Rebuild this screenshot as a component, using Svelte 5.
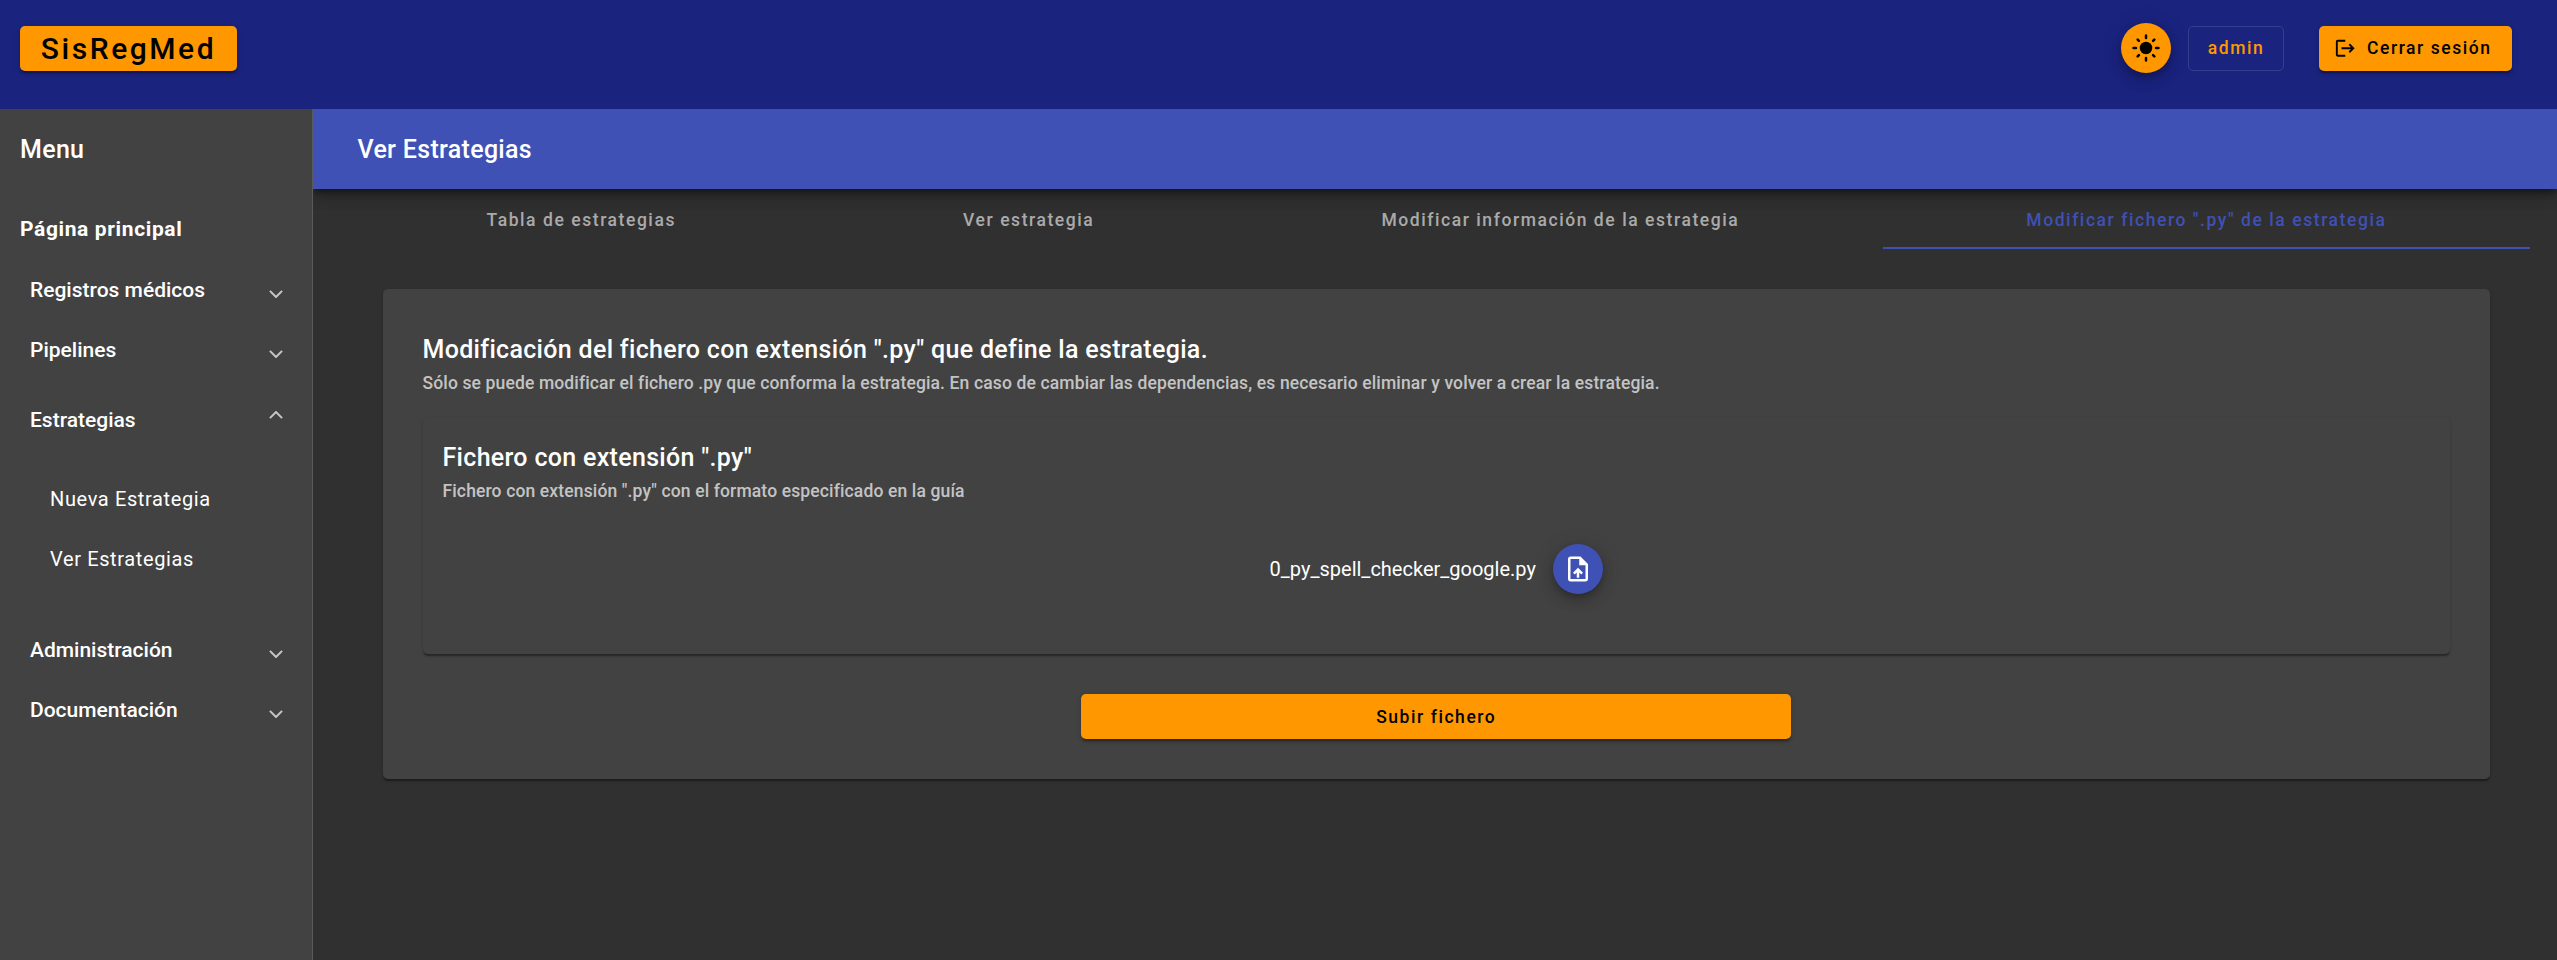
<script>
  const tabs = [
    'Tabla de estrategias',
    'Ver estrategia',
    'Modificar información de la estrategia',
    'Modificar fichero ".py" de la estrategia'
  ];
  let activeTab = $state(3);

  let groups = $state([
    { title: 'Registros médicos', open: false, items: [] },
    { title: 'Pipelines', open: false, items: [] },
    { title: 'Estrategias', open: true, items: ['Nueva Estrategia', 'Ver Estrategias'] },
    { title: 'Administración', open: false, items: [] },
    { title: 'Documentación', open: false, items: [] }
  ]);
</script>

<div class="page">
  <header class="topbar">
    <button class="btn raised brand">SisRegMed</button>
    <div class="actions">
      <button class="fab accent" aria-label="Tema">
        <svg viewBox="0 0 24 24" width="30" height="30">
          <circle cx="12" cy="12" r="5" />
          <path
            d="M2 12h2M20 12h2M12 2v2M12 20v2M5.29 5.29l1.06 1.06M17.65 17.65l1.06 1.06M18.71 5.29l-1.06 1.06M6.35 17.65l-1.06 1.06"
            stroke="currentColor" stroke-width="2" stroke-linecap="round" />
        </svg>
      </button>
      <button class="btn outlined">admin</button>
      <button class="btn raised logout">
        <svg viewBox="0 0 24 24" width="22.5" height="22.5">
          <path d="M17 7l-1.41 1.41L18.17 11H8v2h10.17l-2.58 2.58L17 17l5-5zM4 5h8V3H4c-1.1 0-2 .9-2 2v14c0 1.1.9 2 2 2h8v-2H4V5z" />
        </svg>
        <span>Cerrar sesión</span>
      </button>
    </div>
  </header>

  <div class="body">
    <nav class="sidebar">
      <div class="menu-title">Menu</div>
      <div class="home">Página principal</div>
      {#each groups as group}
        <section>
          <button class="group" class:open={group.open} onclick={() => (group.open = !group.open)}>
            <span>{group.title}</span>
            <svg class="chevron" viewBox="0 0 14 8" width="14" height="8">
              {#if group.open}
                <path d="M.9 7.1L7 1l6.100 6.100" />
              {:else}
                <path d="M.9.9L7 7l6.100-6.100" />
              {/if}
            </svg>
          </button>
          {#if group.open && group.items.length}
            <div class="items">
              {#each group.items as item}
                <div class="item">{item}</div>
              {/each}
            </div>
          {/if}
        </section>
      {/each}
    </nav>

    <main>
      <div class="toolbar">Ver Estrategias</div>
      <div class="tabs">
        {#each tabs as tab, i}
          <button class="tab" class:active={i === activeTab} onclick={() => (activeTab = i)}>{tab}</button>
        {/each}
      </div>

      <div class="card outer">
        <h2>Modificación del fichero con extensión ".py" que define la estrategia.</h2>
        <p>Sólo se puede modificar el fichero .py que conforma la estrategia. En caso de cambiar las dependencias, es necesario eliminar y volver a crear la estrategia.</p>

        <div class="card inner">
          <h2>Fichero con extensión ".py"</h2>
          <p>Fichero con extensión ".py" con el formato especificado en la guía</p>
          <div class="file">
            <span>0_py_spell_checker_google.py</span>
            <button class="fab primary" aria-label="Elegir fichero">
              <svg viewBox="0 0 24 24" width="30" height="30">
                <path d="M14 2H6c-1.100 0-1.990.9-1.990 2L4 20c0 1.100.89 2 1.990 2H18c1.100 0 2-.9 2-2V8l-6-6zm4 18H6V4h7v5h5v11zM8 15.010l1.410 1.410L11 14.840V19h2v-4.160l1.590 1.590L16 15.010 12.010 11z" />
              </svg>
            </button>
          </div>
        </div>

        <button class="btn raised submit">Subir fichero</button>
      </div>
    </main>
  </div>
</div>

<style>
  :global(body) {
    margin: 0;
    background: #303030;
    overflow: hidden;
  }

  .page {
    height: 960px;
    display: flex;
    flex-direction: column;
    color: #fff;
    font-family: Roboto, sans-serif;
    font-size: 20px;
  }

  .page * {
    box-sizing: border-box;
  }

  button {
    font: inherit;
    border: 0;
    margin: 0;
    padding: 0;
    color: inherit;
    background: none;
    cursor: pointer;
  }

  svg {
    display: block;
    fill: currentColor;
    flex: none;
  }

  .topbar {
    flex: none;
    height: 109px;
    padding: 23px 45px 0 20px;
    display: flex;
    justify-content: space-between;
    align-items: flex-start;
    background: #1a237e;
  }

  .btn {
    height: 45px;
    border-radius: 5px;
    padding: 0 20px;
    font-size: 17.5px;
    font-weight: 500;
    letter-spacing: 1.5625px;
    white-space: nowrap;
    display: flex;
    align-items: center;
    justify-content: center;
  }

  .raised {
    background: #ff9800;
    color: #000;
    box-shadow:
      0 3.75px 1.25px -2.5px rgba(0, 0, 0, 0.2),
      0 2.5px 2.5px rgba(0, 0, 0, 0.14),
      0 1.25px 6.25px rgba(0, 0, 0, 0.12);
  }

  .brand {
    width: 217px;
    margin-top: 3px;
    font-size: 30px;
    letter-spacing: 2.55px;
  }

  .actions {
    display: flex;
    align-items: center;
  }

  .outlined {
    width: 96px;
    margin-left: 17px;
    color: #ff9800;
    border: 1px solid rgba(255, 255, 255, 0.12);
  }

  .logout {
    width: 193px;
    margin-left: 35px;
    padding: 0 20px 0 15px;
    justify-content: flex-start;
    gap: 10.5px;
  }

  .fab {
    width: 50px;
    height: 50px;
    border-radius: 50%;
    display: flex;
    align-items: center;
    justify-content: center;
    flex: none;
    box-shadow:
      0 3.75px 6.25px -1.25px rgba(0, 0, 0, 0.2),
      0 7.5px 12.5px rgba(0, 0, 0, 0.14),
      0 1.25px 22.5px rgba(0, 0, 0, 0.12);
  }

  .accent {
    background: #ff9800;
    color: #000;
  }

  .primary {
    background: #3f51b5;
    color: #fff;
  }

  .body {
    flex: 1;
    min-height: 0;
    display: flex;
  }

  .sidebar {
    flex: none;
    width: 313px;
    background: #424242;
    border-right: 1px solid #5a5a5a;
  }

  .menu-title {
    height: 80px;
    line-height: 82px;
    padding-left: 20px;
    font-size: 25px;
    font-weight: 500;
    letter-spacing: 0.3125px;
  }

  .home {
    height: 60px;
    line-height: 60px;
    margin: 10px 0 1px;
    padding-left: 20px;
    font-size: 21px;
    font-weight: 700;
    letter-spacing: 0.625px;
  }

  .group {
    width: 100%;
    height: 60px;
    padding: 0 29px 0 30px;
    display: flex;
    align-items: center;
    justify-content: space-between;
    font-size: 21px;
    font-weight: 500;
  }

  .group.open {
    height: 80px;
  }

  .chevron {
    margin-top: 8px;
    fill: none;
    stroke: rgba(255, 255, 255, 0.7);
    stroke-width: 2;
  }

  .open .chevron {
    margin: 0 0 11px;
  }

  .items {
    padding: 9px 0 31px 50px;
  }

  .item {
    height: 60px;
    line-height: 60px;
    letter-spacing: 0.625px;
  }

  main {
    flex: 1;
    min-width: 0;
    overflow: hidden;
    background: #303030;
  }

  .toolbar {
    height: 80px;
    line-height: 82px;
    padding-left: 44.5px;
    background: #3f51b5;
    font-size: 25px;
    font-weight: 500;
    letter-spacing: 0.3125px;
    box-shadow:
      0 3.75px 6.25px -1.25px rgba(0, 0, 0, 0.4),
      0 7.5px 12.5px rgba(0, 0, 0, 0.2),
      0 1.25px 22.5px rgba(0, 0, 0, 0.12);
  }

  .tabs {
    display: flex;
    margin: 0 27px 0 30px;
  }

  .tab {
    flex: 1 1 auto;
    height: 60px;
    padding: 4px 30px 0;
    border-bottom: 2px solid transparent;
    color: rgba(255, 255, 255, 0.6);
    font-size: 17.5px;
    font-weight: 500;
    letter-spacing: 1.5625px;
    white-space: nowrap;
  }

  .tab.active {
    color: #3f51b5;
    border-color: #3f51b5;
  }

  .card {
    background: #424242;
    border-radius: 5px;
    box-shadow:
      0 2.5px 1.25px -1.25px rgba(0, 0, 0, 0.2),
      0 1.25px 1.25px rgba(0, 0, 0, 0.14),
      0 1.25px 3.75px rgba(0, 0, 0, 0.12);
  }

  .outer {
    height: 490px;
    margin: 40px 67px 0 70px;
    padding: 41px 40px 0 39.5px;
  }

  .inner {
    height: 237px;
    margin-top: 19px;
    padding: 21px 20px 0;
  }

  h2 {
    margin: 0;
    height: 40px;
    line-height: 40px;
    font-size: 25px;
    font-weight: 500;
    letter-spacing: 0.3125px;
  }

  p {
    margin: 0;
    height: 28px;
    line-height: 27px;
    font-size: 17.5px;
    font-weight: 500;
    letter-spacing: 0.135px;
    color: rgba(255, 255, 255, 0.7);
    white-space: nowrap;
  }

  .file {
    margin-top: 38px;
    display: flex;
    align-items: center;
    justify-content: center;
    gap: 17px;
  }

  .submit {
    width: 35%;
    margin: 40px auto 0;
  }
</style>
